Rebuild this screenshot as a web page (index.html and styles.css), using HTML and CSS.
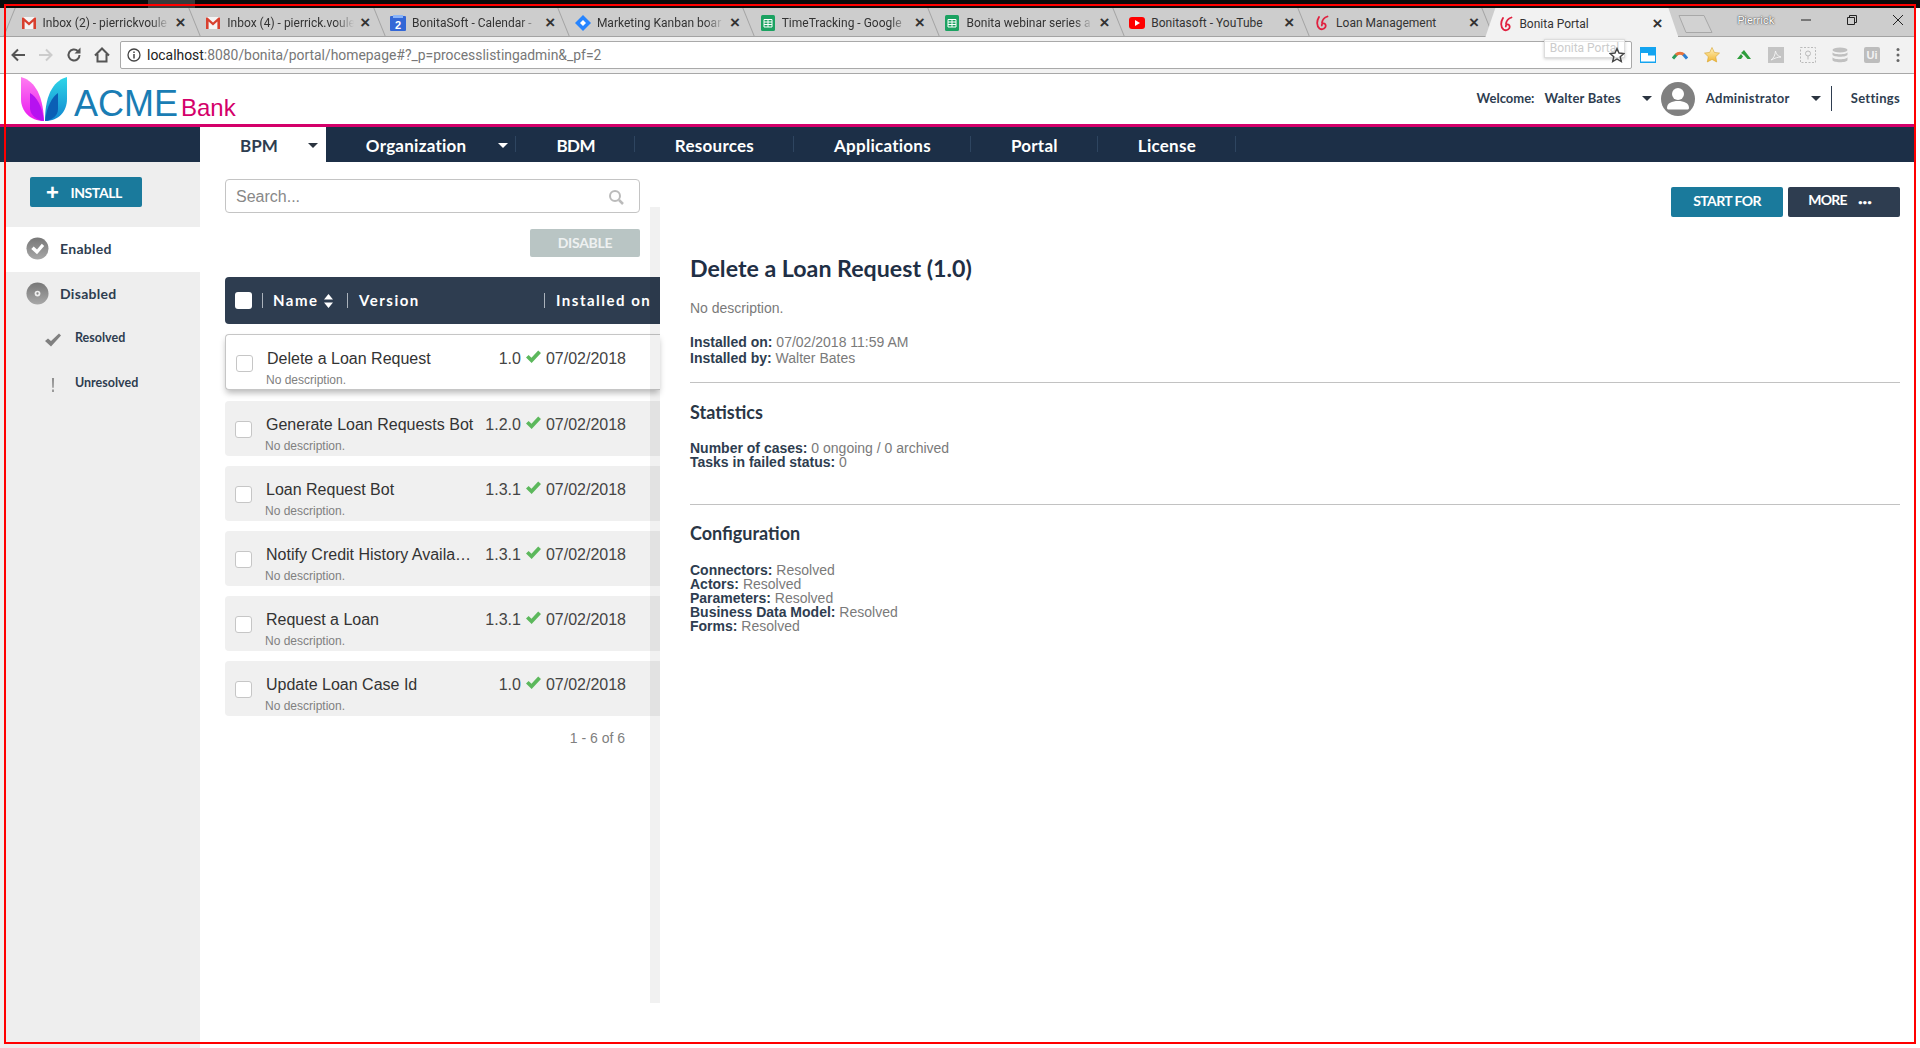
FILE: index.html
```html
<!DOCTYPE html>
<html lang="en">
<head>
<meta charset="utf-8">
<title>Bonita Portal</title>
<link rel="stylesheet" href="styles.css">
</head>
<body>
<svg class="defs" width="0" height="0" aria-hidden="true">
  <defs>
    <linearGradient id="ball" x1="0" y1="0" x2="0" y2="1"><stop offset="0" stop-color="#777"/><stop offset="1" stop-color="#a8a8a8"/></linearGradient>
    <linearGradient id="ext-star" x1="0" y1="0" x2="0" y2="1"><stop offset="0" stop-color="#fff3c0"/><stop offset="1" stop-color="#f2b632"/></linearGradient>
  </defs>
  <symbol id="i-gmail" viewBox="0 0 16 16"><rect x="1" y="2" width="14" height="12" fill="#f4f4f4"/><path d="M1 14V2.500h1.500L8 7.500l5.500-5H15V14h-2.600V6.600L8 10.500 3.600 6.600V14z" fill="#d8402f"/></symbol>
  <symbol id="i-sheet" viewBox="0 0 16 16"><rect x="1" y="0" width="14" height="16" rx="1.500" fill="#1ba261"/><path d="M4 4.500h8v7.500H4zM4 7h8M4 9.500h8M8 4.500V12" fill="none" stroke="#fff" stroke-width="1"/></symbol>
  <symbol id="i-bonita" viewBox="0 0 16 16"><path d="M5 2C2.500 6 2.500 11 5.500 13.500 8.500 15.500 12.500 13 11.500 9.800 10.700 7.500 7.500 8 7.800 10.500" fill="none" stroke="#e0203f" stroke-width="1.800" stroke-linecap="round"/><path d="M13.500 1.500C10.500 2.500 8.500 4.500 8 7.500" fill="none" stroke="#e0203f" stroke-width="1.800" stroke-linecap="round"/></symbol>
  <symbol id="i-check" viewBox="0 0 16 14"><path d="M0 7.500 2.800 4.800l3 3L13 0l3 2.800L6 13.500z" fill="#5cb85c"/></symbol>
</svg>

<div class="desktop-bar"><span class="notch"></span><span class="clock">7/2/2018</span></div>

<div class="app">
  <div class="tabstrip">
    <div class="tab"><svg class="fav"><use href="#i-gmail"/></svg><span class="tab-title">Inbox (2) - pierrickvoule</span><span class="tab-x">×</span></div>
    <div class="tab"><svg class="fav"><use href="#i-gmail"/></svg><span class="tab-title">Inbox (4) - pierrick.voule</span><span class="tab-x">×</span></div>
    <div class="tab"><svg class="fav" viewBox="0 0 16 16"><rect x="0" y="1" width="16" height="15" rx="1" fill="#3367d6"/><rect x="3" y="0" width="10" height="3" fill="#8ab4f8"/><text x="8" y="14" class="cal-num">2</text></svg><span class="tab-title">BonitaSoft - Calendar - </span><span class="tab-x">×</span></div>
    <div class="tab"><svg class="fav" viewBox="0 0 16 16"><path d="M8 0l8 8-8 8-8-8z" fill="#2684ff"/><path d="M8 5l3 3-3 3-3-3z" fill="#fff"/></svg><span class="tab-title">Marketing Kanban boar</span><span class="tab-x">×</span></div>
    <div class="tab"><svg class="fav"><use href="#i-sheet"/></svg><span class="tab-title">TimeTracking - Google</span><span class="tab-x">×</span></div>
    <div class="tab"><svg class="fav"><use href="#i-sheet"/></svg><span class="tab-title">Bonita webinar series a</span><span class="tab-x">×</span></div>
    <div class="tab"><svg class="fav" viewBox="0 0 16 16"><rect x="0" y="2" width="16" height="12" rx="3" fill="#f00"/><path d="M6 5l5 3-5 3z" fill="#fff"/></svg><span class="tab-title tab-title-full">Bonitasoft - YouTube</span><span class="tab-x">×</span></div>
    <div class="tab"><svg class="fav"><use href="#i-bonita"/></svg><span class="tab-title tab-title-full">Loan Management</span><span class="tab-x">×</span></div>
    <div class="tab tab-active"><svg class="fav"><use href="#i-bonita"/></svg><span class="tab-title tab-title-full">Bonita Portal</span><span class="tab-x">×</span></div>
    <svg class="newtab" viewBox="0 0 36 20"><path d="M1 1.500h25l8 17H8z" fill="#d2d2d2" stroke="#a8a8a8"/></svg>
    <span class="profile">Pierrick</span>
    <svg class="winbtn win-min" viewBox="0 0 12 12"><path d="M1 6h10" stroke="#222" stroke-width="1"/></svg>
    <svg class="winbtn win-max" viewBox="0 0 12 12"><path d="M1.500 3.500h7v7h-7zM3.500 3.500v-2h7v7h-2" fill="none" stroke="#222"/></svg>
    <svg class="winbtn win-close" viewBox="0 0 12 12"><path d="M1 1l10 10M11 1L1 11" stroke="#222"/></svg>
  </div>

  <div class="toolbar">
    <svg class="nav-ico" viewBox="0 0 16 16"><path d="M15 8H3M8 2.500 2.500 8 8 13.500" fill="none" stroke="#555" stroke-width="2"/></svg>
    <svg class="nav-ico" viewBox="0 0 16 16"><path d="M1 8h12M8 2.500 13.500 8 8 13.500" fill="none" stroke="#ccc" stroke-width="2"/></svg>
    <svg class="nav-ico" viewBox="0 0 16 16"><path d="M13.500 8a5.500 5.500 0 1 1-1.700-4" fill="none" stroke="#555" stroke-width="2"/><path d="M14.500 0.500v6h-6z" fill="#555"/></svg>
    <svg class="nav-ico" viewBox="0 0 16 16"><path d="M1 8.500 8 1.500l7 7M3.500 7v7.500h9V7" fill="none" stroke="#555" stroke-width="2"/></svg>
    <div class="omnibox">
      <svg class="info" viewBox="0 0 14 14"><circle cx="7" cy="7" r="6" fill="none" stroke="#444" stroke-width="1.300"/><path d="M7 6v4.500M7 3.500v1.500" stroke="#444" stroke-width="1.500"/></svg>
      <span class="url"><span class="url-host">localhost</span>:8080/bonita/portal/homepage#?_p=processlistingadmin&amp;_pf=2</span>
      <span class="tooltip">Bonita Portal</span>
      <svg class="star" viewBox="0 0 16 16"><path d="M8 1.500l2 4.500 4.900.5-3.700 3.200 1.100 4.800L8 12l-4.300 2.500 1.100-4.800L1.100 6.500 6 6z" fill="none" stroke="#444" stroke-width="1.400"/></svg>
    </div>
    <div class="ext-row">
      <svg class="ext" viewBox="0 0 16 16"><rect width="16" height="16" fill="#14a4f0"/><path d="M1 6h7v2.500h7V14.500H1z" fill="#fff"/></svg>
      <svg class="ext" viewBox="0 0 16 16"><path d="M1 11.500 4.500 7.500" fill="none" stroke="#2a9d5c" stroke-width="3"/><path d="M4 8C6 5.500 10 5.500 12 8" fill="none" stroke="#e8733c" stroke-width="3"/><path d="M11.500 7.500 15 11.500" fill="none" stroke="#2c7fd0" stroke-width="3"/></svg>
      <svg class="ext" viewBox="0 0 16 16"><path d="M8 .5l2.300 4.900 5.200.7-3.800 3.600 1 5.300L8 12.400l-4.700 2.600 1-5.300L.5 6.100l5.200-.7z" fill="url(#ext-star)" stroke="#d9a22a" stroke-width=".6"/></svg>
      <svg class="ext" viewBox="0 0 16 16"><path d="M1 12l4-5 2 2.500-2 2.500zM5 6l3-3 7 9h-3.500L8 8z" fill="#2e9e3c"/></svg>
      <svg class="ext" viewBox="0 0 16 16"><rect width="16" height="16" fill="#c4c4c4"/><path d="M3 13c3-2 4-5 4.500-9 .5 3 2 5 5.500 6-3 0-6 1-10 3z" fill="none" stroke="#f2f2f2"/></svg>
      <svg class="ext" viewBox="0 0 16 16"><rect x=".5" y=".5" width="15" height="15" fill="none" stroke="#bbb" stroke-dasharray="2 1.500"/><circle cx="8" cy="6.500" r="2.500" fill="none" stroke="#bbb"/><path d="M8 9v3.500" stroke="#bbb"/></svg>
      <svg class="ext" viewBox="0 0 16 16"><ellipse cx="8" cy="3" rx="7.500" ry="2.500" fill="#c0c0c0"/><path d="M.5 5c0 3 15 3 15 0v2.500c0 3-15 3-15 0zM.5 10c0 3 15 3 15 0v3c0 3-15 3-15 0z" fill="#c0c0c0"/></svg>
      <span class="ext-ui">Ui</span>
      <svg class="ext-dots" viewBox="0 0 4 16"><circle cx="2" cy="2.500" r="1.500" fill="#666"/><circle cx="2" cy="8" r="1.500" fill="#666"/><circle cx="2" cy="13.500" r="1.500" fill="#666"/></svg>
    </div>
  </div>

  <header class="brand">
    <div class="logo">
      <svg class="logo-mark" viewBox="0 0 48 44">
        <defs>
          <linearGradient id="lg-a" x1="0" y1="0" x2="0" y2="1"><stop offset="0" stop-color="#ff7df0"/><stop offset="1" stop-color="#e818f0"/></linearGradient>
          <linearGradient id="lg-b" x1="0" y1="0" x2="0" y2="1"><stop offset="0" stop-color="#2fd6e8"/><stop offset="1" stop-color="#1186d0"/></linearGradient>
        </defs>
        <path d="M1 0c11 3 22 14 23 44C10 44 1 34 1 22z" fill="url(#lg-a)"/>
        <path d="M10 16c7 4 12 13 14 28-7-1-13-5-14-12z" fill="#b612f0"/>
        <path d="M47 0C36 3 25 14 25 44c14 0 22-10 22-22z" fill="url(#lg-b)"/>
        <path d="M38 16c-6 4-11 13-13 28 7-1 13-5 13-12z" fill="#0b5fb5"/>
      </svg>
      <span class="logo-acme">ACME</span><span class="logo-bank">Bank</span>
    </div>
    <div class="usermenu">
      <span class="um-label">Welcome:</span>
      <span class="um-name">Walter Bates</span>
      <span class="caret caret-dark caret-user"></span>
      <svg class="avatar" viewBox="0 0 34 34"><circle cx="17" cy="17" r="17" fill="#808080"/><circle cx="17" cy="12" r="6" fill="#fff"/><path d="M6 26c0-5 5-7 11-7s11 2 11 7c0 1-1 1.500-2 1.500H8c-1 0-2-.5-2-1.500z" fill="#fff"/></svg>
      <span class="um-role">Administrator</span>
      <span class="caret caret-dark caret-role"></span>
      <span class="um-settings">Settings</span>
    </div>
  </header>

  <nav class="mainnav">
    <a class="nav-item nav-active">BPM<span class="caret caret-dark nav-caret-bpm"></span></a>
    <a class="nav-item">Organization<span class="caret caret-light nav-caret-org"></span></a>
    <a class="nav-item nav-tight">BDM</a>
    <a class="nav-item">Resources</a>
    <a class="nav-item">Applications</a>
    <a class="nav-item">Portal</a>
    <a class="nav-item">License</a>
  </nav>

  <main class="layout">
    <aside class="sidebar">
      <button class="btn-install"><span class="plus">+</span>INSTALL</button>
      <ul class="filters">
        <li class="filter filter-on">
          <svg class="f-ico" viewBox="0 0 24 24"><circle cx="12" cy="12" r="11.500" fill="url(#ball)"/><path d="M5.500 12.500 8 10l3.500 3 5-6 2.500 2.500-7.500 8.500z" fill="#fff"/></svg>Enabled
        </li>
        <li class="filter">
          <svg class="f-ico" viewBox="0 0 24 24"><circle cx="12" cy="12" r="11.500" fill="url(#ball)"/><circle cx="12" cy="12" r="3" fill="#eee"/><circle cx="12" cy="12" r="1.200" fill="#888"/></svg>Disabled
        </li>
        <li class="filter filter-sub">
          <svg class="s-ico" viewBox="0 0 16 14"><path d="M0 8l3-2.500 3 2.500 8-7.500 2 2L6 13.500z" fill="#808080"/></svg>Resolved
        </li>
        <li class="filter filter-sub">
          <svg class="s-ico" viewBox="0 0 16 16"><path d="M6.800 0h2.400l-.4 11H7.200zM7 13h2v3H7z" fill="#909090"/></svg>Unresolved
        </li>
      </ul>
    </aside>

    <section class="listpane">
      <div class="search"><span class="search-ph">Search...</span>
        <svg class="search-ico" viewBox="0 0 16 16"><circle cx="7" cy="7" r="5" fill="none" stroke="#bbb" stroke-width="2"/><path d="M11 11l4 4" stroke="#bbb" stroke-width="2.500"/></svg>
      </div>
      <div class="actions"><button class="btn-disable">DISABLE</button></div>
      <div class="thead">
        <span class="cb cb-head"></span>
        <span class="th th-name">Name<svg class="sort" viewBox="0 0 9 14"><path d="M4.500 0 9 5.500H0zM4.500 14 0 8.500h9z" fill="#fff"/></svg></span>
        <span class="th th-version">Version</span>
        <span class="th th-date">Installed on</span>
      </div>
      <div class="row row-selected"><span class="cb"></span><div class="row-main"><div class="row-name">Delete a Loan Request</div><div class="row-desc">No description.</div></div><span class="row-ver">1.0</span><svg class="row-check"><use href="#i-check"/></svg><span class="row-date">07/02/2018</span></div>
      <div class="row"><span class="cb"></span><div class="row-main"><div class="row-name">Generate Loan Requests Bot</div><div class="row-desc">No description.</div></div><span class="row-ver">1.2.0</span><svg class="row-check"><use href="#i-check"/></svg><span class="row-date">07/02/2018</span></div>
      <div class="row"><span class="cb"></span><div class="row-main"><div class="row-name">Loan Request Bot</div><div class="row-desc">No description.</div></div><span class="row-ver">1.3.1</span><svg class="row-check"><use href="#i-check"/></svg><span class="row-date">07/02/2018</span></div>
      <div class="row"><span class="cb"></span><div class="row-main"><div class="row-name">Notify Credit History Available</div><div class="row-desc">No description.</div></div><span class="row-ver">1.3.1</span><svg class="row-check"><use href="#i-check"/></svg><span class="row-date">07/02/2018</span></div>
      <div class="row"><span class="cb"></span><div class="row-main"><div class="row-name">Request a Loan</div><div class="row-desc">No description.</div></div><span class="row-ver">1.3.1</span><svg class="row-check"><use href="#i-check"/></svg><span class="row-date">07/02/2018</span></div>
      <div class="row"><span class="cb"></span><div class="row-main"><div class="row-name">Update Loan Case Id</div><div class="row-desc">No description.</div></div><span class="row-ver">1.0</span><svg class="row-check"><use href="#i-check"/></svg><span class="row-date">07/02/2018</span></div>
      <div class="pager">1 - 6 of 6</div>
      <div class="scroll-strip"></div>
    </section>

    <section class="detail">
      <div class="detail-actions">
        <button class="btn-start">START FOR</button>
        <button class="btn-more">MORE<span class="more-dots">•••</span></button>
      </div>
      <h1 class="d-title">Delete a Loan Request (1.0)</h1>
      <p class="d-desc">No description.</p>
      <div class="d-block d-block-installed">
        <div><b>Installed on:</b> 07/02/2018 11:59 AM</div>
        <div><b>Installed by:</b> Walter Bates</div>
      </div>
      <hr class="d-rule">
      <h2 class="d-head">Statistics</h2>
      <div class="d-block">
        <div><b>Number of cases:</b> 0 ongoing / 0 archived</div>
        <div><b>Tasks in failed status:</b> 0</div>
      </div>
      <hr class="d-rule d-rule-2">
      <h2 class="d-head d-head-config">Configuration</h2>
      <div class="d-block">
        <div><b>Connectors:</b> Resolved</div>
        <div><b>Actors:</b> Resolved</div>
        <div><b>Parameters:</b> Resolved</div>
        <div><b>Business Data Model:</b> Resolved</div>
        <div><b>Forms:</b> Resolved</div>
      </div>
    </section>
  </main>
</div>

<div class="red-frame"></div>
</body>
</html>
```

FILE: styles.css
```css
* { box-sizing: border-box; }
html, body { margin: 0; padding: 0; height: 100%; background: #fff; overflow: hidden; }
body { font-family: "Liberation Sans", Arial, sans-serif; color: #333; position: relative; }
.defs { position: absolute; }

.desktop-bar { height: 8px; background: #0b0b0b; display: flex; overflow: hidden; position: relative; }
.notch { width: 47px; height: 8px; margin-left: 148px; background: #3a3a3a; }
.clock { margin-left: auto; margin-right: 65px; margin-top: -11px; font: 12px/14px "Noto Sans", sans-serif; color: #fff; }

.app { width: 1915px; }

/* browser tabs */
.tabstrip { height: 29px; background: #cdcdcd; border-bottom: 1px solid #a3a3a3; display: flex; align-items: center; padding-left: 11px; position: relative; }
.tab { width: 184.800px; height: 28px; flex: none; display: flex; align-items: center; padding: 2px 0 0 9.500px; position: relative; font: 12px/16px Roboto, sans-serif; color: #333; }
.tab::after { content: ""; position: absolute; right: 0; top: 0; bottom: 0; width: 1px; background: #a3a3a3; transform: skewX(22deg) translateX(-1px); }
.tab:first-child::before { content: ""; position: absolute; left: -2px; top: 0; bottom: 0; width: 1px; background: #a3a3a3; transform: skewX(-22deg); }
.fav { width: 16px; height: 16px; flex: none; margin-right: 6px; }
.cal-num { font: bold 11px "Liberation Sans", sans-serif; fill: #fff; text-anchor: middle; }
.tab-title { width: 127px; flex: none; overflow: hidden; white-space: nowrap; -webkit-mask-image: linear-gradient(90deg, #000 85%, transparent); mask-image: linear-gradient(90deg, #000 85%, transparent); }
.tab-title-full { -webkit-mask-image: none; mask-image: none; }
.tab-x { margin-left: 4px; width: 14px; text-align: center; font: bold 17px/16px "Liberation Sans", sans-serif; color: #333; }
.tab-active { background: #f2f2f2; height: 29px; margin-bottom: -1px; width: 193px; padding-left: 13px; clip-path: polygon(10px 0, 183px 0, 193px 100%, 0 100%); margin-left: -4px; }
.tab-active .fav { margin-right: 5px; }
.tab-active::after { display: none; }
.newtab { width: 36px; height: 20px; margin-top: 4px; flex: none; }
.profile { margin-left: 23px; font: 11px Roboto, sans-serif; color: #fff; text-shadow: 0 0 2px #444, 0 0 1px #444; margin-top: -3px; }
.winbtn { width: 12px; height: 12px; flex: none; margin-top: -5px; }
.win-min { margin-left: 26px; }
.win-max { margin-left: 34px; }
.win-close { margin-left: 34px; }

/* browser toolbar */
.toolbar { height: 37px; background: #f2f2f2; border-bottom: 1px solid #a8a8a8; display: flex; align-items: center; padding-left: 10px; position: relative; }
.nav-ico { width: 16px; height: 16px; flex: none; margin-right: 12px; }
.omnibox { flex: 1 0 auto; max-width: 1513px; height: 28px; margin-left: -2px; background: #fff; border: 1px solid #a9a9a9; border-radius: 2px; display: flex; align-items: center; padding-left: 6px; position: relative; }
.info { width: 14px; height: 14px; flex: none; margin-right: 6px; }
.url { font: 13.900px Roboto, sans-serif; color: #777; white-space: nowrap; }
.url-host { color: #222; }
.star { width: 16px; height: 16px; position: absolute; right: 6px; top: 5px; }
.tooltip { position: absolute; right: 6px; top: -3px; width: 81px; height: 19px; background: rgba(255,255,255,.75); border: 1px solid #ddd; box-shadow: 0 1px 3px rgba(0,0,0,.2); font: 12px/17px Roboto, sans-serif; color: #ccc; text-align: center; }
.ext-row { width: 283px; flex: none; display: flex; align-items: center; padding-left: 8px; gap: 16px; }
.ext { width: 16px; height: 16px; flex: none; }
.ext-ui { width: 16px; height: 16px; flex: none; background: #bdbdbd; border-radius: 2px; color: #f2f2f2; font: bold 11px/16px "Liberation Sans", sans-serif; text-align: center; }
.ext-dots { width: 4px; height: 16px; flex: none; }

/* portal header */
.brand { height: 53px; border-bottom: 3px solid #d4006a; display: flex; align-items: stretch; justify-content: space-between; background: #fff; }
.logo { display: flex; align-items: flex-end; padding-left: 20px; padding-bottom: 1px; }
.logo-mark { width: 48px; height: 44px; flex: none; margin-right: 6px; margin-bottom: 2px; }
.logo-acme { font-size: 36px; line-height: 38px; color: #1a7db4; }
.logo-bank { font-size: 24px; line-height: 30px; color: #d4006a; margin-left: 3px; }
.usermenu { display: flex; align-items: center; font: 700 13px/16px Lato, sans-serif; letter-spacing: .3px; color: #2e3d50; padding: 0 15px 2px 0; }
.um-label { letter-spacing: 0; }
.um-name { margin-left: 10px; letter-spacing: .15px; }
.caret { display: inline-block; width: 0; height: 0; border-left: 5px solid transparent; border-right: 5px solid transparent; border-top: 5px solid #333; }
.caret-dark { border-top-color: #2b3440; }
.caret-light { border-top-color: #fff; }
.caret-user { margin-left: 21px; }
.avatar { width: 34px; height: 34px; margin: 2px 0 0 9px; flex: none; }
.um-role { margin-left: 11px; }
.caret-role { margin-left: 21px; }
.um-settings { margin-left: 10px; padding-left: 19px; border-left: 1px solid #2e3d50; height: 25px; line-height: 25px; }

/* navigation */
.mainnav { height: 35px; background: #1c2f47; display: flex; padding-left: 200px; position: relative; }
.nav-item { display: flex; align-items: center; padding: 2px 40px 0; color: #fff; font: 700 17px/20px Lato, sans-serif; letter-spacing: .25px; position: relative; }
.nav-item::after { content: ""; position: absolute; right: 0; top: 9px; height: 16px; width: 1px; background: #2e4560; }
.nav-tight { letter-spacing: -.6px; }
.nav-active { background: #fff; color: #2e3d50; letter-spacing: 0; }
.nav-active::after { display: none; }
.nav-caret-bpm { margin-left: 30px; margin-right: -32px; }
.nav-caret-org { margin-left: 32px; margin-right: -32px; }

/* layout */
.layout { display: flex; height: 886px; }
.sidebar { width: 200px; flex: none; background: #eee; padding-top: 15px; }
.btn-install { display: flex; align-items: center; width: 112px; height: 30px; margin-left: 30px; background: #1a7a9c; color: #fff; border: 0; border-radius: 2px; font: 700 14px/16px Lato, sans-serif; letter-spacing: -.4px; padding: 1px 0 0 16px; }
.plus { font: 700 22px/16px "Liberation Sans", sans-serif; margin-right: 12px; }
.filters { list-style: none; margin: 20px 0 0; padding: 0 0 0 5px; }
.filter { height: 45px; display: flex; align-items: center; padding: 0 0 2px 21px; font: 700 14px/16px Lato, sans-serif; letter-spacing: .3px; color: #2e3d50; }
.filter-on { background: #fff; }
.f-ico { width: 23px; height: 23px; flex: none; margin-right: 11px; }
.filter-sub { font-size: 12.500px; letter-spacing: 0; padding: 0 0 3px 40px; }
.s-ico { width: 16px; height: 14px; flex: none; margin: 4px 14px 0 0; }

/* list */
.listpane { width: 460px; flex: none; padding: 17px 0 0 25px; position: relative; }
.search { width: 415px; height: 34px; border: 1px solid #c4c4c4; border-radius: 4px; display: flex; align-items: center; justify-content: space-between; padding: 1px 15px 0 10px; }
.search-ph { font-size: 16px; color: #888; }
.search-ico { width: 16px; height: 16px; }
.actions { width: 415px; display: flex; justify-content: flex-end; margin-top: 16px; }
.btn-disable { width: 110px; height: 28px; background: #b9c5c4; color: #eef1f1; border: 0; border-radius: 2px; font: 700 14px/16px Lato, sans-serif; letter-spacing: -.3px; }
.thead { height: 47px; margin-top: 20px; background: #2e3d50; border-radius: 4px 0 0 4px; display: flex; align-items: center; padding-left: 10px; color: #fff; }
.cb { display: block; width: 17px; height: 17px; flex: none; background: #fff; border: 1px solid #c6c6c6; border-radius: 3px; }
.cb-head { border: 0; margin-right: 10px; }
.th { height: 15px; border-left: 1px solid #aab2bb; padding-left: 11px; font: 700 15px/13px Lato, sans-serif; letter-spacing: 1.500px; white-space: nowrap; display: flex; align-items: center; }
.th-name { width: 85px; padding-left: 10px; }
.sort { width: 9px; height: 14px; margin-left: 5px; }
.th-version { width: 197px; }
.row { height: 55px; margin-top: 10px; background: #f0f0f0; border-radius: 4px 0 0 4px; display: flex; align-items: flex-start; padding: 14px 34px 0 10px; font-size: 16px; line-height: 20px; color: #333; }
.row-selected { height: 56px; margin-bottom: 11px; background: #fff; border: 1px solid #c6c6c6; border-right: 0; box-shadow: 0 4px 6px -1px rgba(0,0,0,.28); }
.row .cb { margin-top: 6px; }
.row-selected + .row { margin-top: 0; }
.row-main { width: 208px; margin-left: 14px; flex: none; }
.row-name { white-space: nowrap; overflow: hidden; text-overflow: ellipsis; }
.row-desc { font-size: 12px; line-height: 14px; color: #808080; margin: 4px 0 0 -1px; }
.row-ver { margin-left: auto; color: #444; }
.row-check { width: 15px; height: 14px; margin: 1px 5px 0; flex: none; }
.row-date { color: #444; }
.pager { margin-top: 14px; padding-right: 35px; text-align: right; font-size: 14px; line-height: 16px; color: #808080; }
.scroll-strip { position: absolute; left: 450px; top: 45px; width: 10px; height: 796px; background: rgba(0,0,0,.055); }

/* detail */
.detail { flex: 1; padding: 25px 15px 0 30px; min-width: 0; }
.detail-actions { display: flex; justify-content: flex-end; gap: 5px; }
.btn-start, .btn-more { width: 112px; height: 30px; border: 0; border-radius: 2px; color: #fff; font: 700 14px/16px Lato, sans-serif; padding: 0 0 2px; }
.btn-start { background: #1a7a9c; letter-spacing: -.6px; }
.btn-more { background: #2e3d50; letter-spacing: -.7px; padding-right: 8px; }
.more-dots { font-size: 8px; margin-left: 11px; letter-spacing: 0; }
.d-title { margin: 36px 0 0; font: 700 23.200px/30px Lato, sans-serif; color: #1f2f45; }
.d-desc { margin: 17px 0 0; font-size: 14px; line-height: 16px; color: #7a7a7a; }
.d-block { font-size: 14px; line-height: 14px; color: #7a7a7a; }
.d-block b { color: #2e3d50; }
.d-block-installed { margin-top: 18px; line-height: 16px; }
.d-rule { height: 1px; margin: 16px 0 0; border: 0; background: #c2c2c2; }
.d-rule-2 { margin-top: 35px; }
.d-head { margin: 18px 0 18px; font: 700 18px/22px Lato, sans-serif; color: #2a3645; }
.d-head-config { margin: 17px 0 19px; }

.red-frame { position: absolute; left: 4px; top: 4px; width: 1912px; height: 1040px; border: 2px solid #f00; pointer-events: none; }
```
